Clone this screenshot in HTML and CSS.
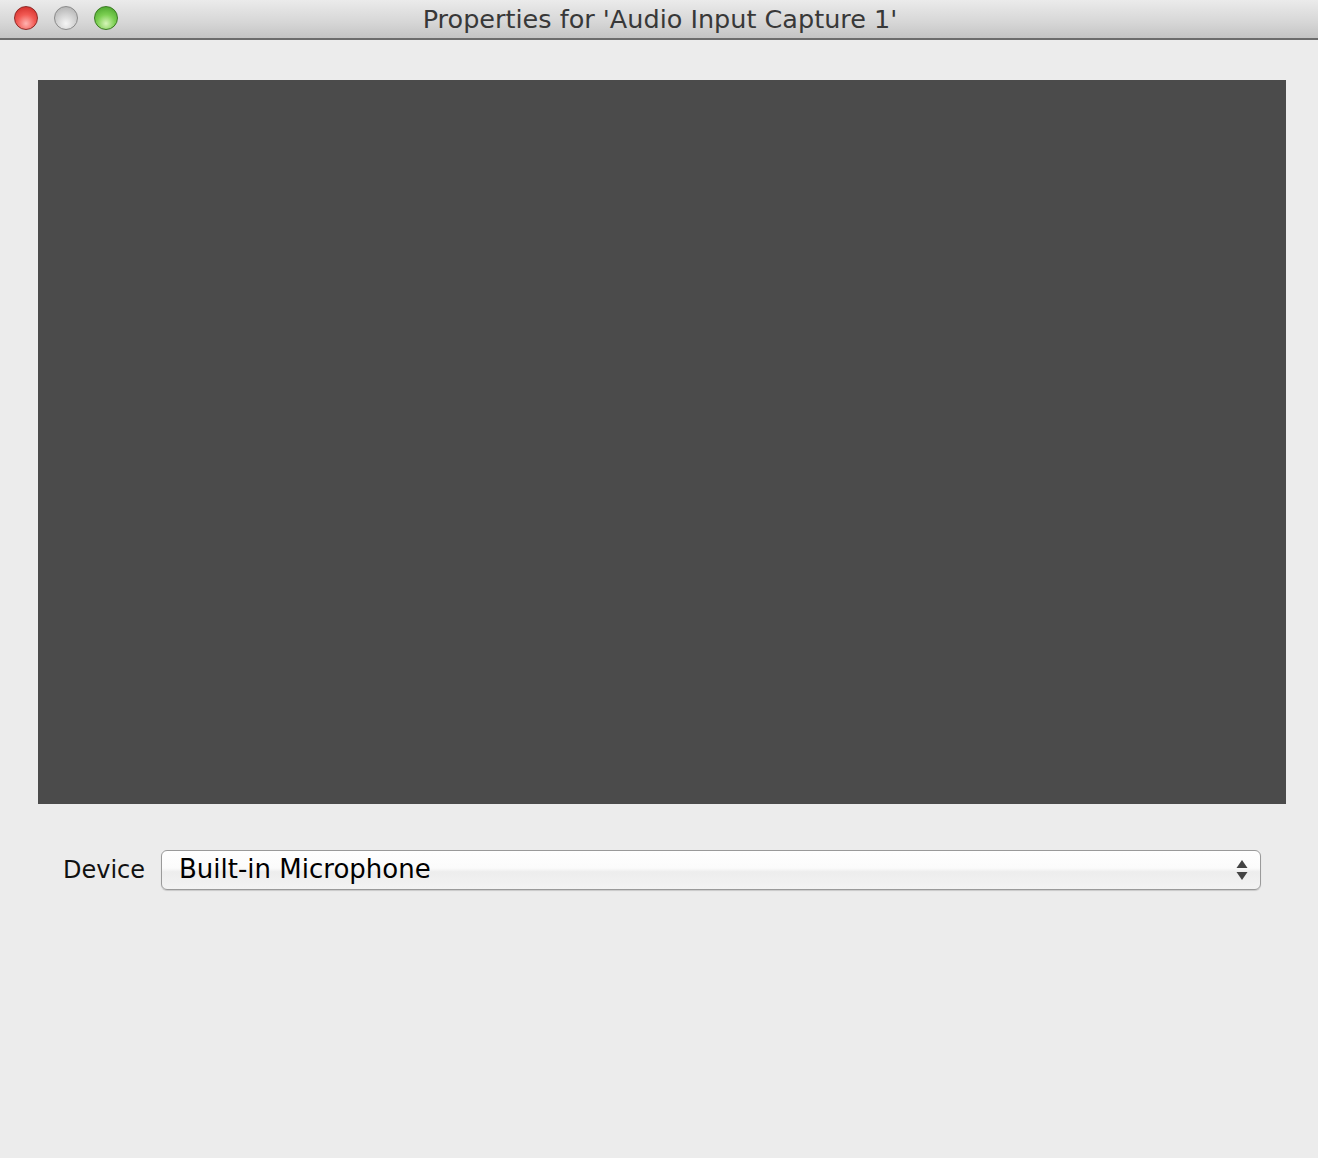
FILE: index.html
```html
<!DOCTYPE html>
<html>
<head>
<meta charset="utf-8">
<link rel="stylesheet" href="styles.css">
</head>
<body>
<div class="window">
  <div class="titlebar">
    <div class="lights">
      <span class="light red"></span>
      <span class="light gray"></span>
      <span class="light green"></span>
    </div>
    <div class="title">Properties for 'Audio Input Capture 1'</div>
  </div>
  <div class="content">
    <div class="preview"></div>
    <div class="row">
      <label class="label">Device</label>
      <div class="select">
        <span class="value">Built‑in Microphone</span>
        <svg class="arrows" width="12" height="26" viewBox="0 0 12 26">
          <path d="M6 3 L11.5 11 L0.5 11 Z" fill="#444"/>
          <path d="M6 23 L11.5 15 L0.5 15 Z" fill="#444"/>
        </svg>
      </div>
    </div>
  </div>
</div>
</body>
</html>
```
FILE: styles.css
```css
html, body {
  margin: 0;
  padding: 0;
  background: #ececec;
}
.window {
  width: 1318px;
  height: 1158px;
  background: #ececec;
  font-family: "DejaVu Sans", "Liberation Sans", sans-serif;
}
.titlebar {
  position: relative;
  height: 38px;
  background: linear-gradient(#ebebeb, #d6d6d6 60%, #c4c4c4);
  border-bottom: 2px solid #6c6c6c;
  display: flex;
  align-items: center;
  justify-content: center;
}
.lights {
  position: absolute;
  left: 14px;
  top: 6px;
  display: flex;
  gap: 16px;
}
.light {
  width: 24px;
  height: 24px;
  border-radius: 50%;
  box-sizing: border-box;
}
.red {
  background: radial-gradient(circle at 50% 75%, #ffb3b0 0%, #f25a54 45%, #c9231f 100%);
  border: 1px solid #8e2a27;
}
.gray {
  background: radial-gradient(circle at 50% 75%, #f5f5f5 0%, #d3d3d3 45%, #a9a9a9 100%);
  border: 1px solid #8a8a8a;
}
.green {
  background: radial-gradient(circle at 50% 75%, #d6f5b8 0%, #7ccf52 45%, #3f9a24 100%);
  border: 1px solid #3a7a22;
}
.title {
  font-size: 25.5px;
  color: #383838;
  margin-left: 2px;
}
.content {
  padding: 40px 32px 0 38px;
}
.preview {
  width: 1248px;
  height: 724px;
  background: #4b4b4b;
}
.row {
  display: flex;
  align-items: center;
  margin-top: 46px;
  padding-left: 25px;
}
.label {
  font-size: 24px;
  color: #111;
  width: 98px;
}
.select {
  width: 1100px;
  height: 40px;
  box-sizing: border-box;
  border: 1px solid #9a9a9a;
  border-radius: 6px;
  background: linear-gradient(#ffffff, #fbfbfb 45%, #ededed 55%, #f3f3f3);
  box-shadow: 0 1px 1px rgba(0,0,0,0.15);
  display: flex;
  align-items: center;
  justify-content: space-between;
  padding: 0 12px 0 17px;
}
.value {
  font-size: 26px;
  color: #000;
  margin-top: -2px;
}
.arrows {
  display: block;
}
```
